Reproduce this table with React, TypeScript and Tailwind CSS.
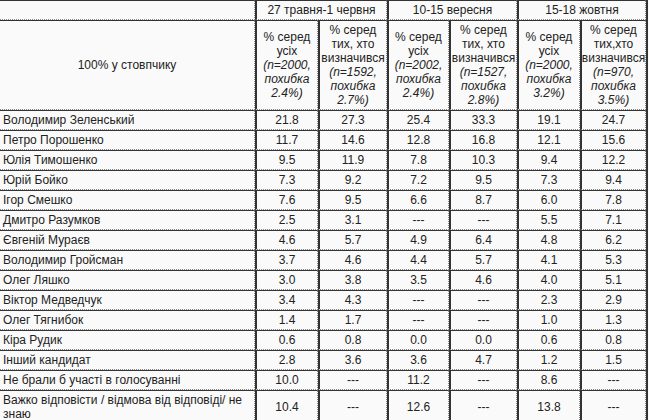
import React from "react";

const base =
  "flex items-center border-t border-r border-b border-t-[#333] border-l-[#333] border-r-[#888] border-b-[#888] [border-right-style:dotted] [border-bottom-style:dotted]";
const numCell = `${base} border-l-2 justify-center text-center`;
const firstCell = `${base} border-l-0 justify-start text-left pl-[3px] pr-[2px]`;

type Row = [string, string[]];

const rows: Row[] = [
  ["Володимир Зеленський", ["21.8", "27.3", "25.4", "33.3", "19.1", "24.7"]],
  ["Петро Порошенко", ["11.7", "14.6", "12.8", "16.8", "12.1", "15.6"]],
  ["Юлія Тимошенко", ["9.5", "11.9", "7.8", "10.3", "9.4", "12.2"]],
  ["Юрій Бойко", ["7.3", "9.2", "7.2", "9.5", "7.3", "9.4"]],
  ["Ігор Смешко", ["7.6", "9.5", "6.6", "8.7", "6.0", "7.8"]],
  ["Дмитро Разумков", ["2.5", "3.1", "---", "---", "5.5", "7.1"]],
  ["Євгеній Мураєв", ["4.6", "5.7", "4.9", "6.4", "4.8", "6.2"]],
  ["Володимир Гройсман", ["3.7", "4.6", "4.4", "5.7", "4.1", "5.3"]],
  ["Олег Ляшко", ["3.0", "3.8", "3.5", "4.6", "4.0", "5.1"]],
  ["Віктор Медведчук", ["3.4", "4.3", "---", "---", "2.3", "2.9"]],
  ["Олег Тягнибок", ["1.4", "1.7", "---", "---", "1.0", "1.3"]],
  ["Кіра Рудик", ["0.6", "0.8", "0.0", "0.0", "0.6", "0.8"]],
  ["Інший кандидат", ["2.8", "3.6", "3.6", "4.7", "1.2", "1.5"]],
  ["Не брали б участі в голосуванні", ["10.0", "---", "11.2", "---", "8.6", "---"]],
];

const heads: { a: string[]; n: string; p: string }[] = [
  { a: ["% серед", "усіх"], n: "(n=2000,", p: "2.4%)" },
  { a: ["% серед", "тих, хто", "визначився"], n: "(n=1592,", p: "2.7%)" },
  { a: ["% серед", "усіх"], n: "(n=2002,", p: "2.4%)" },
  { a: ["% серед", "тих, хто", "визначився"], n: "(n=1527,", p: "2.8%)" },
  { a: ["% серед", "усіх"], n: "(n=2000,", p: "3.2%)" },
  { a: ["% серед", "тих,хто", "визначився"], n: "(n=970,", p: "3.5%)" },
];

export default function App() {
  return (
    <div className="min-h-[420px] w-[649px] bg-[#fafafa] text-[#222] font-['Liberation_Sans',Arial,sans-serif] text-[12px] leading-[14px] overflow-hidden">
      <div className="grid w-[648px] grid-cols-[255px_63px_69px_62px_68px_63px_66px] border-r-2 border-[#333]">
        {/* header row 1 */}
        <div className={`${firstCell} h-[20px]`}></div>
        <div className={`${numCell} h-[20px] col-span-2`}>27 травня-1 червня</div>
        <div className={`${numCell} h-[20px] col-span-2`}>10-15 вересня</div>
        <div className={`${numCell} h-[20px] col-span-2`}>15-18 жовтня</div>

        {/* header row 2 */}
        <div className={`${base} border-l-0 justify-center text-center h-[90px]`}>100% у стовпчику</div>
        {heads.map((h, i) => (
          <div key={i} className={`${numCell} h-[90px] px-[1px]`}>
            <div className="whitespace-nowrap">
              {h.a.map((t, j) => (
                <div key={j}>{t}</div>
              ))}
              <div className="italic">{h.n}</div>
              <div className="italic">похибка</div>
              <div className="italic">{h.p}</div>
            </div>
          </div>
        ))}

        {rows.map(([name, vals], r) => (
          <React.Fragment key={r}>
            <div className={`${firstCell} h-[20px] whitespace-nowrap`}>{name}</div>
            {vals.map((v, i) => (
              <div key={i} className={`${numCell} h-[20px]`}>
                {v}
              </div>
            ))}
          </React.Fragment>
        ))}

        <div className={`${firstCell} h-[34px]`}>Важко відповісти / відмова від відповіді/ не знаю</div>
        {["10.4", "---", "12.6", "---", "13.8", "---"].map((v, i) => (
          <div key={i} className={`${numCell} h-[34px]`}>
            {v}
          </div>
        ))}
      </div>
    </div>
  );
}
